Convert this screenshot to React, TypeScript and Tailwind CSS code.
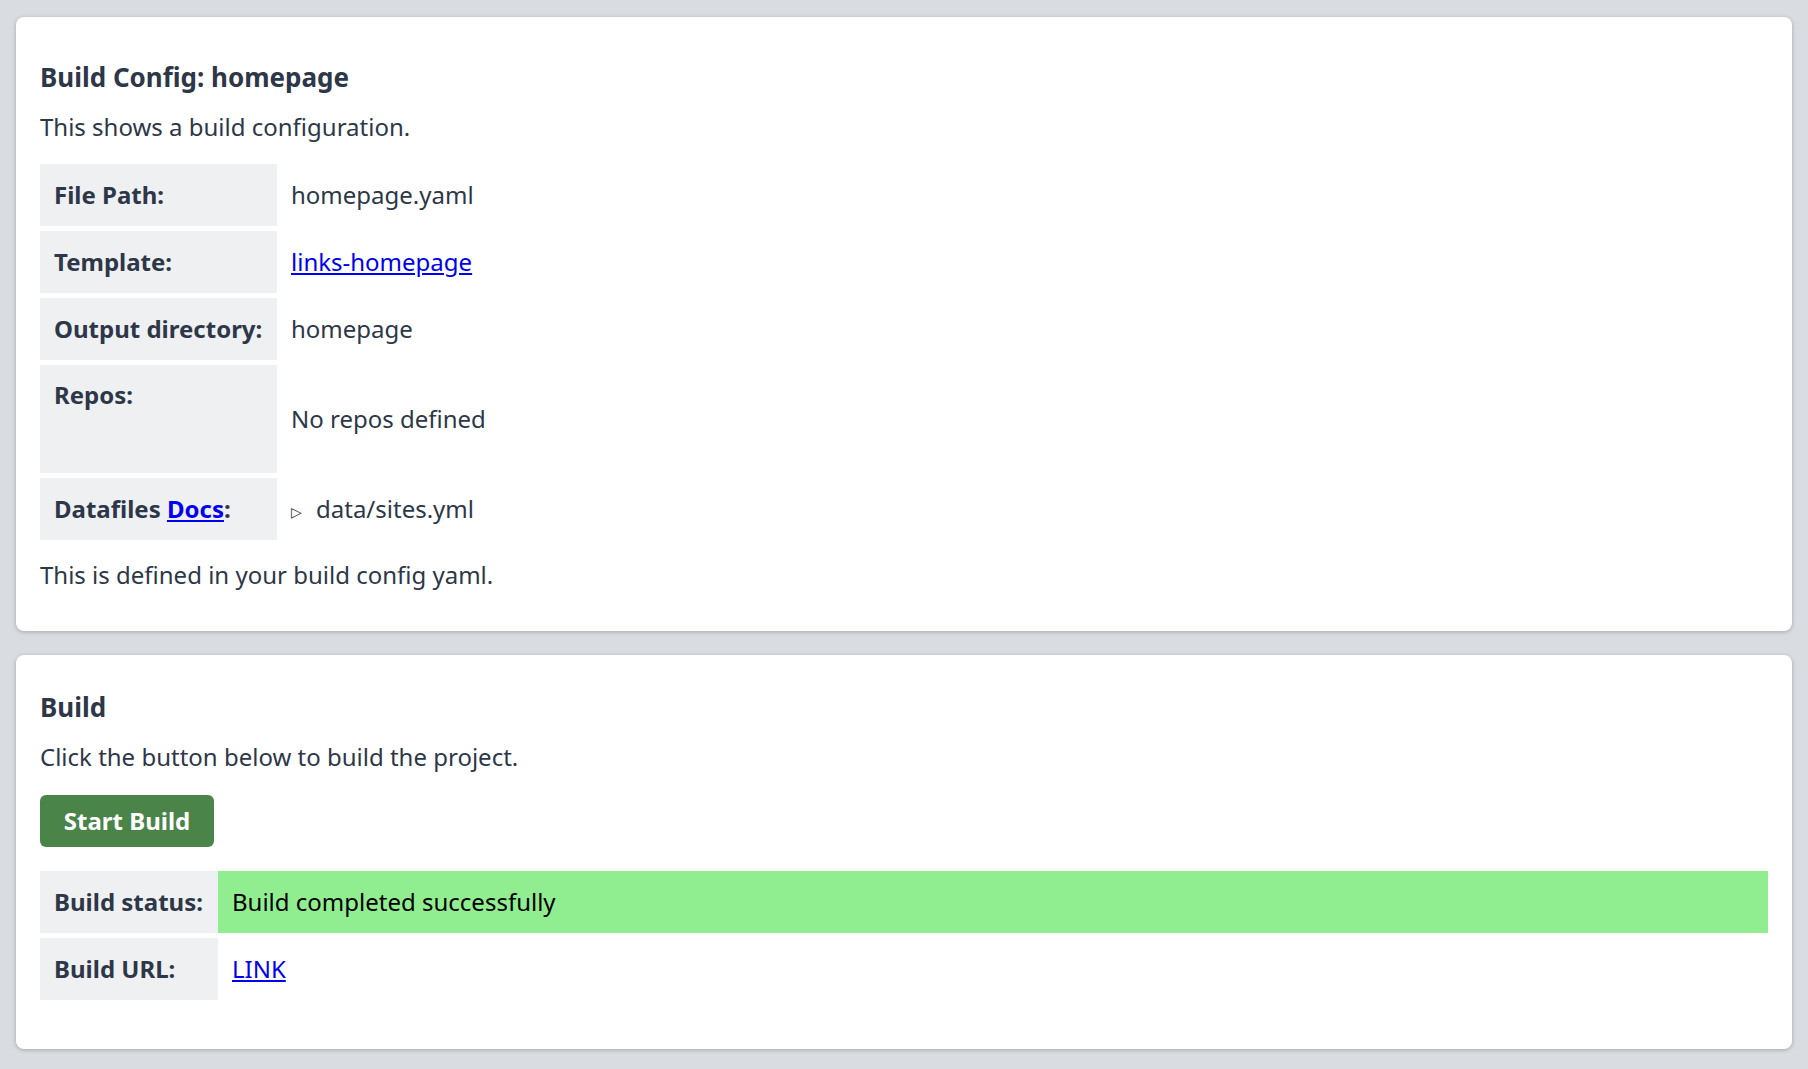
export default function App() {
  const label = "bg-[#eff0f2] font-bold align-middle px-[14px] h-[62px] text-left";
  const val = "px-[14px] align-middle";
  return (
    <div className="min-h-[1069px] bg-[#d9dde1] px-4 pt-[17px] pb-6 text-[#2d3748] text-[24px]" style={{ fontFamily: '"Noto Sans", sans-serif' }}>
      <div className="bg-white rounded-lg shadow-[0_1px_4px_rgba(0,0,0,0.25)] px-6 pt-[40px] pb-[38px]">
        <h2 className="text-[26px] font-bold leading-[40px]">Build Config: homepage</h2>
        <p className="mt-[12px] leading-[36px]">This shows a build configuration.</p>
        <table className="mt-[14px] border-separate border-spacing-y-[5px] -mx-0">
          <tbody>
            <tr><td className={label + " w-[237px]"}>File Path:</td><td className={val}>homepage.yaml</td></tr>
            <tr><td className={label}>Template:</td><td className={val}><a href="#" className="text-[#0000ee] underline">links-homepage</a></td></tr>
            <tr><td className={label}>Output directory:</td><td className={val}>homepage</td></tr>
            <tr><td className="bg-[#eff0f2] font-bold align-top px-[14px] pt-[12px] h-[108px]">Repos:</td><td className={val}>No repos defined</td></tr>
            <tr><td className={label}>Datafiles <a href="#" className="text-[#0000ee] underline">Docs</a>:</td><td className={val}><span className="text-[14px] mr-[14px] align-middle">▷</span>data/sites.yml</td></tr>
          </tbody>
        </table>
        <p className="mt-[12px] leading-[36px]">This is defined in your build config yaml.</p>
      </div>
      <div className="bg-white rounded-lg shadow-[0_1px_4px_rgba(0,0,0,0.25)] px-6 pt-[32px] pb-[44px] mt-[24px]">
        <h2 className="text-[26px] font-bold leading-[40px]">Build</h2>
        <p className="mt-[12px] leading-[36px]">Click the button below to build the project.</p>
        <button className="mt-[20px] bg-[#4a8449] text-white font-bold rounded-md h-[52px] w-[174px]">Start Build</button>
        <table className="mt-[19px] w-full border-separate border-spacing-y-[5px]">
          <tbody>
            <tr><td className={label + " w-[178px]"}>Build status:</td><td className={val + " bg-[#90ee90] text-black"}>Build completed successfully</td></tr>
            <tr><td className={label}>Build URL:</td><td className={val}><a href="#" className="text-[#0000ee] underline">LINK</a></td></tr>
          </tbody>
        </table>
      </div>
    </div>
  );
}
